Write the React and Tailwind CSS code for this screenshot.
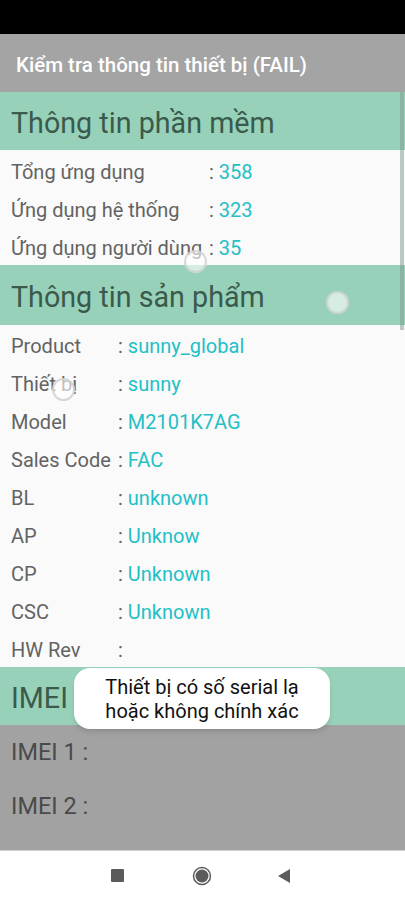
import React from 'react'

const software = [
  ['Tổng ứng dụng', '358'],
  ['Ứng dụng hệ thống', '323'],
  ['Ứng dụng người dùng', '35'],
]

const product = [
  ['Product', 'sunny_global'],
  ['Thiết bị', 'sunny'],
  ['Model', 'M2101K7AG'],
  ['Sales Code', 'FAC'],
  ['BL', 'unknown'],
  ['AP', 'Unknow'],
  ['CP', 'Unknown'],
  ['CSC', 'Unknown'],
  ['HW Rev', ''],
]

const SectionHeader = ({ children, className = '' }) => (
  <div className={`bg-[#98d1b9] flex items-center pl-[11px] pt-[5px] text-[28.7px] text-[#3a5a4c] ${className}`}>
    {children}
  </div>
)

const InfoRow = ({ label, value, labelWidth }) => (
  <div className="h-[38px] flex items-center pl-[11px] text-[20px] whitespace-nowrap">
    <span className={`text-[#636363] ${labelWidth}`}>{label}</span>
    <span className="text-[#636363]">:</span>
    <span className="text-[#22c0c7] ml-[5px]">{value}</span>
  </div>
)

const Touch = ({ className }) => (
  <div className={`absolute w-[23px] h-[23px] rounded-full border-2 border-[#c9cfcc]/80 bg-white/60 ${className}`} />
)

export default function App() {
  return (
    <div className="relative w-[405px] h-[900px] overflow-hidden bg-[#fafafa]" style={{ fontFamily: 'Roboto, "Noto Sans", sans-serif' }}>
      {/* status bar */}
      <div className="h-[34px] bg-black" />

      {/* title bar */}
      <div className="h-[58px] bg-[#a4a4a4] flex items-center pl-[16px] pt-[4px] text-[20.5px] font-medium text-white whitespace-nowrap">
        Kiểm tra thông tin thiết bị (FAIL)
      </div>

      <SectionHeader className="h-[58px]">Thông tin phần mềm</SectionHeader>
      <div className="h-[115px] pt-[3px] overflow-hidden">
        {software.map(([l, v]) => (
          <InfoRow key={l} label={l} value={v} labelWidth="w-[198px]" />
        ))}
      </div>

      <SectionHeader className="h-[60px]">Thông tin sản phẩm</SectionHeader>
      <div className="h-[342px] pt-[2px] overflow-hidden">
        {product.map(([l, v]) => (
          <InfoRow key={l} label={l} value={v} labelWidth="w-[107px]" />
        ))}
      </div>

      <SectionHeader className="h-[58px]">IMEI</SectionHeader>
      <div className="h-[125px] bg-[#a2a2a2] pt-[1px]">
        <div className="h-[54px] flex items-center pl-[11px] text-[23.5px] text-[#4a4a4a]">IMEI 1 :</div>
        <div className="h-[54px] flex items-center pl-[11px] text-[23.5px] text-[#4a4a4a]">IMEI 2 :</div>
      </div>

      {/* navigation bar */}
      <div className="h-[50px] bg-white border-t border-[#d0d0d0] flex items-center pl-[107px]">
        <div className="w-[20px] flex justify-center">
          <div className="w-[13px] h-[13px] bg-[#5b5b5b] rounded-[1px]" />
        </div>
        <div className="w-[20px] ml-[65px] flex justify-center">
          <svg width="20" height="20" viewBox="0 0 20 20">
            <circle cx="10" cy="10" r="8.5" fill="none" stroke="#5b5b5b" strokeWidth="1.5" />
            <circle cx="10" cy="10" r="6.5" fill="#5b5b5b" />
          </svg>
        </div>
        <div className="w-[20px] ml-[62px] flex justify-center">
          <svg width="14" height="16" viewBox="0 0 14 16">
            <polygon points="13,1 13,15 1,8" fill="#5b5b5b" />
          </svg>
        </div>
      </div>

      {/* scrollbar */}
      <div className="absolute right-[1px] top-[92px] w-[4px] h-[238px] bg-[#7a9a8c]/50" />

      {/* touch indicators */}
      <Touch className="left-[184px] top-[250px]" />
      <Touch className="left-[326px] top-[291px]" />
      <Touch className="left-[52px] top-[378px]" />

      {/* toast */}
      <div className="absolute left-[74px] top-[668px] w-[256px] h-[61px] bg-white rounded-[16px] shadow-md flex flex-col items-center justify-center text-[20px] leading-[24px] text-[#111]">
        <span>Thiết bị có số serial lạ</span>
        <span>hoặc không chính xác</span>
      </div>
    </div>
  )
}
